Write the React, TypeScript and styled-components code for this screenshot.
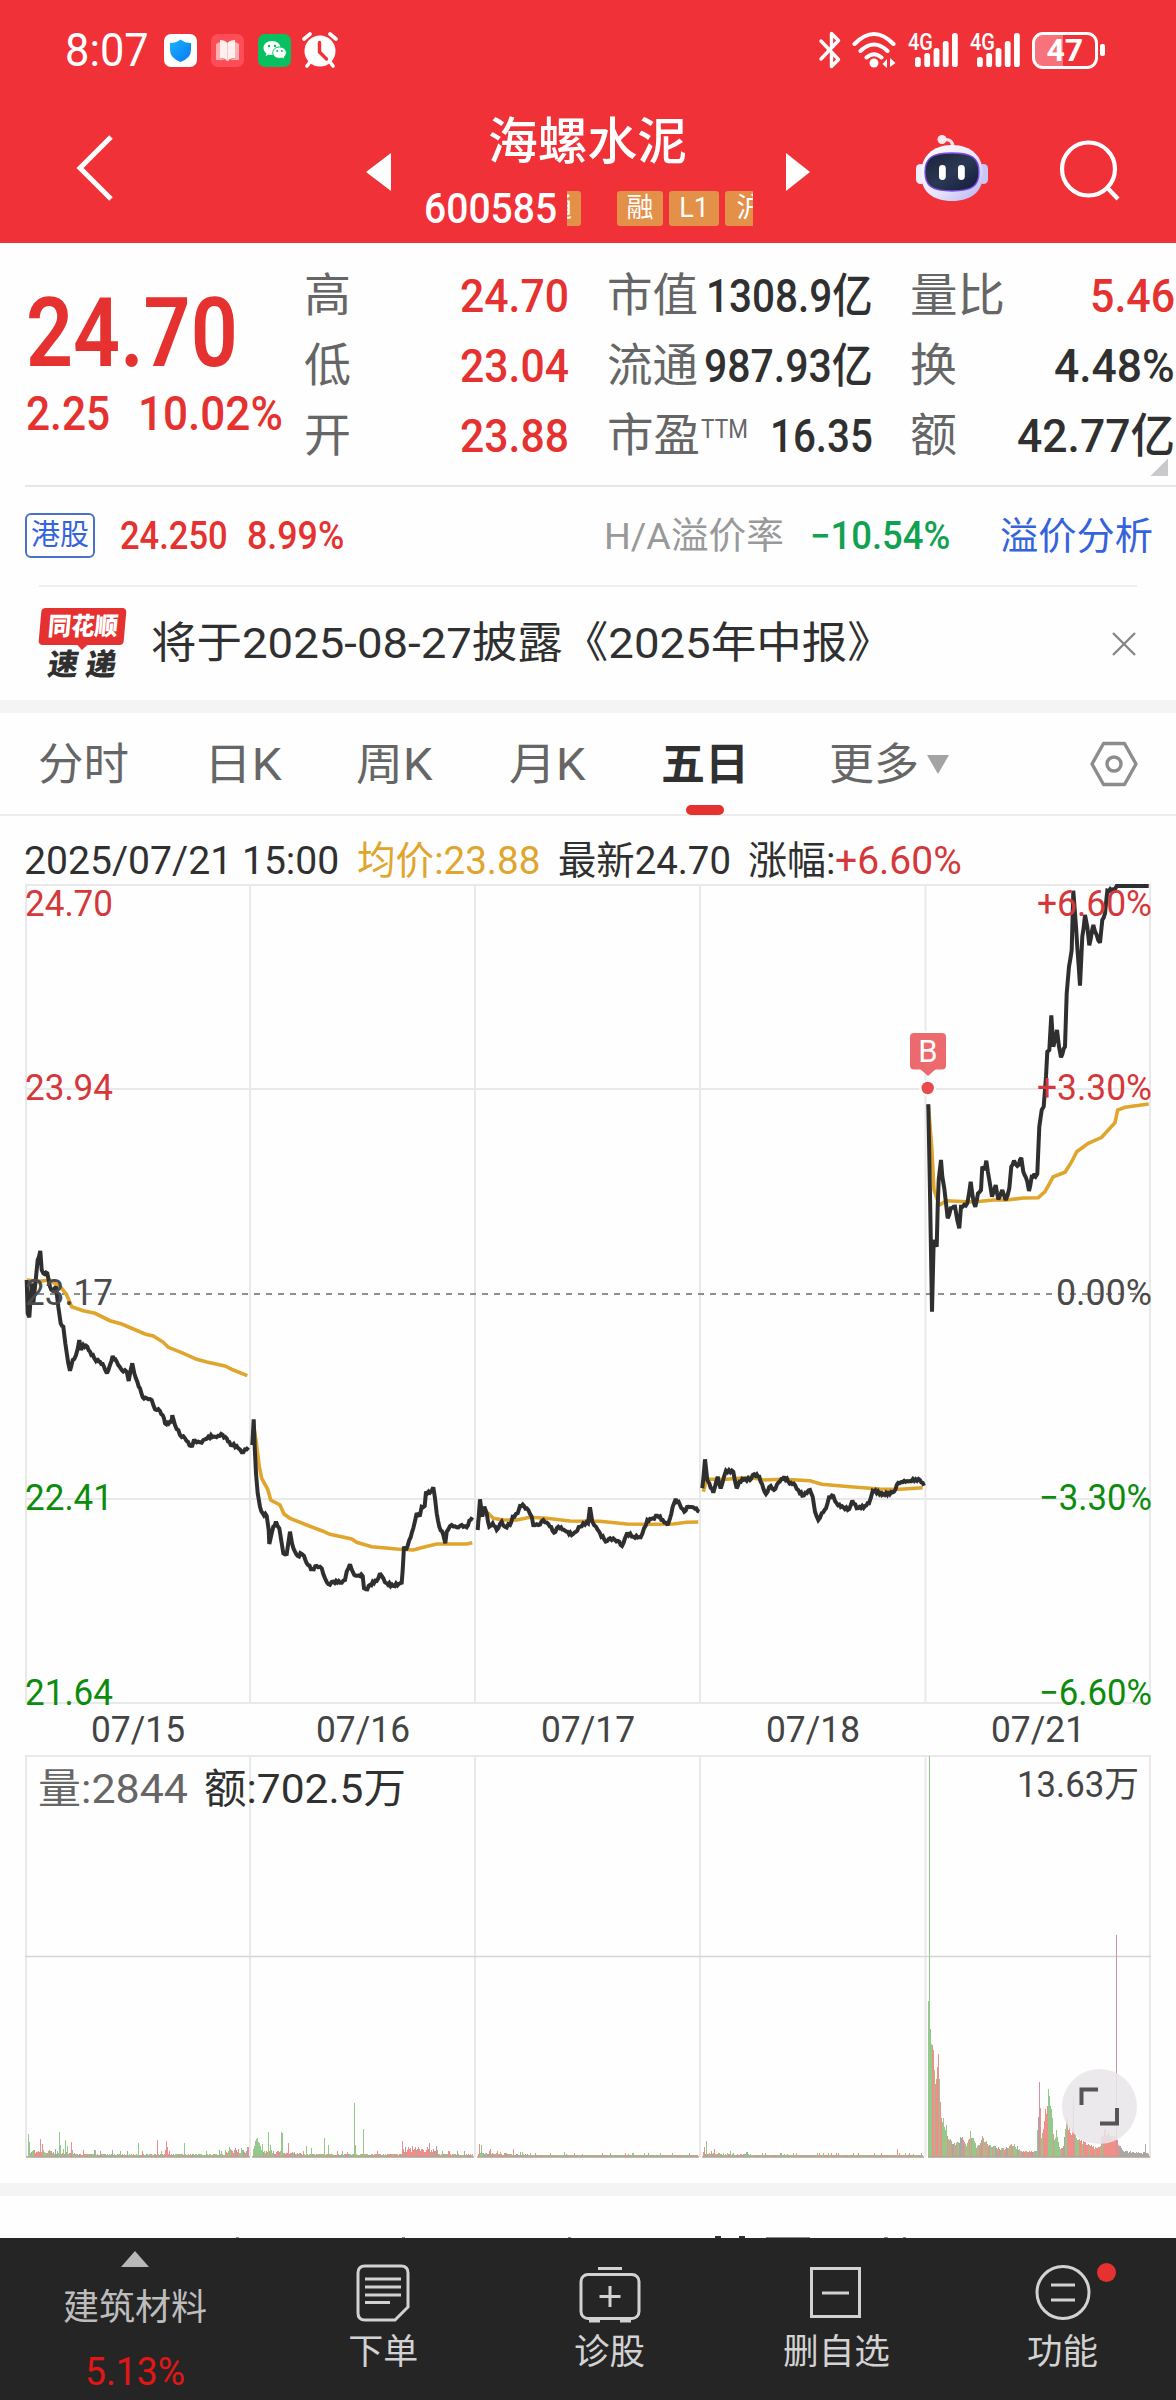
import React, { useLayoutEffect, useRef, useState } from "react";
import styled, { createGlobalStyle, css } from "styled-components";

const SANS = `Roboto, "Noto Sans CJK SC", sans-serif`;
const C = {
  brand: "#f03138",
  red: "#e5312f",
  softRed: "#d5383a",
  green: "#12a150",
  axisGreen: "#0c8c0c",
  ink: "#303030",
  label: "#666666",
  faint: "#999999",
  blue: "#3563dc",
  gold: "#e0a52c",
  grid: "#e9e9e9",
};

const Global = createGlobalStyle`
  * { box-sizing: border-box; }
  html, body { margin: 0; padding: 0; background: #fefefe; }
  body { font-family: ${SANS}; color: ${C.ink}; }
`;

/* ---------- text fitted to a known column width ---------- */

type TextProps = { $size: number; $color?: string; $weight?: number; $ml?: number };

const FitBox = styled.span<TextProps & { $w: number }>`
  display: block;
  flex: none;
  width: ${(p) => p.$w}px;
  height: ${(p) => p.$size}px;
  margin-left: ${(p) => p.$ml ?? 0}px;
  line-height: 1;
  font-size: ${(p) => p.$size}px;
  font-weight: ${(p) => p.$weight ?? 400};
  color: ${(p) => p.$color ?? C.ink};
  white-space: pre;
`;
const FitInner = styled.span`
  display: inline-block;
  transform-origin: 0 50%;
  line-height: 1;
`;

function Fit({
  w, size, color, weight, ml, children,
}: { w: number; size: number; color?: string; weight?: number; ml?: number; children: React.ReactNode }) {
  const ref = useRef<HTMLSpanElement>(null);
  const [scale, setScale] = useState(1);
  useLayoutEffect(() => {
    if (ref.current) setScale(w / ref.current.offsetWidth);
  }, [w, children]);
  return (
    <FitBox $w={w} $size={size} $color={color} $weight={weight} $ml={ml}>
      <FitInner ref={ref} style={{ transform: `scaleX(${scale})` }}>{children}</FitInner>
    </FitBox>
  );
}

const Icon = styled.svg<{ $ml?: number; $up?: number }>`
  display: block;
  flex: none;
  margin-left: ${(p) => p.$ml ?? 0}px;
  margin-bottom: ${(p) => p.$up ?? 0}px;
`;

/* ---------- page ---------- */

const Page = styled.main`
  width: 1176px;
  height: 2400px;
  display: flex;
  flex-direction: column;
  overflow: hidden;
  background: #fefefe;
`;
const Header = styled.header`
  flex: none;
  height: 243px;
  background: ${C.brand};
`;
const StatusBar = styled.div`
  display: flex;
  align-items: center;
  height: 100px;
  padding: 0 71px 0 65px;
`;
const StatusRight = styled.div`
  display: flex;
  align-items: center;
  margin-left: auto;
`;
const Battery = styled.div`
  display: flex;
  align-items: center;
  margin-left: 11px;
`;
const Cell = styled.div`
  display: flex;
  align-items: center;
  justify-content: center;
  width: 66px;
  height: 37px;
  border: 3px solid #fff;
  border-radius: 11px;
  background: linear-gradient(90deg, #f7727a 0 47%, ${C.brand} 47%);
`;
const Nub = styled.div`
  width: 5px;
  height: 12px;
  margin-left: 2px;
  border-radius: 2px;
  background: #fff;
`;
const Nav = styled.div`
  display: flex;
  align-items: center;
  height: 143px;
  padding-left: 75px;
`;
const TitleBlock = styled.div`
  display: flex;
  flex-direction: column;
  align-items: center;
  gap: 24px;
  width: 331px;
  margin-left: 31px;
`;
const CodeRow = styled.div`
  display: flex;
  align-items: center;
  width: 331px;
  height: 36px;
`;
const Tags = styled.div`
  display: flex;
  flex: 1;
  gap: 6px;
  margin-left: 10px;
  overflow: hidden;
`;
const Tag = styled.div<{ $w: number; $cut?: boolean }>`
  display: flex;
  flex: none;
  align-items: center;
  justify-content: ${(p) => (p.$cut ? "flex-end" : "center")};
  width: ${(p) => p.$w}px;
  height: 35px;
  overflow: hidden;
  border-radius: 3px;
  background: #e39049;
  color: #fff;
  font-size: 27px;
  line-height: 1;
  ${(p) => p.$cut && css`margin-right: 30px; padding-right: 9px; border-radius: 0 3px 3px 0;`}
`;

/* ---------- quote ---------- */

const Quote = styled.section`
  position: relative;
  display: flex;
  flex: none;
  height: 244px;
  margin-left: 25px;
  border-bottom: 2px solid #e6e6e6;
`;
const LastPrice = styled.div`
  display: flex;
  flex-direction: column;
  gap: 9px;
  width: 279px;
  padding-top: 42px;
`;
const Inline = styled.div`
  display: flex;
  align-items: center;
`;
const StatCol = styled.div<{ $w: number; $ml?: number }>`
  display: flex;
  flex-direction: column;
  width: ${(p) => p.$w}px;
  margin-left: ${(p) => p.$ml ?? 0}px;
  padding-top: 17px;
`;
const StatRow = styled.div`
  display: flex;
  align-items: center;
  justify-content: space-between;
  height: 70px;
`;
const Sup = styled.span`
  display: block;
  height: 37px;
`;
const Corner = styled.div`
  position: absolute;
  right: 8px;
  bottom: 9px;
  width: 18px;
  height: 18px;
  background: linear-gradient(135deg, transparent 50%, #c9c8ca 50%);
`;
const HkRow = styled.section`
  display: flex;
  flex: none;
  align-items: center;
  height: 98px;
  padding-left: 25px;
`;
const HkBadge = styled.div`
  display: flex;
  align-items: center;
  justify-content: center;
  width: 70px;
  height: 45px;
  margin: -2px 25px 0 0;
  border: 2px solid #4a72c8;
  border-radius: 6px;
`;
const News = styled.section`
  display: flex;
  flex: none;
  align-items: center;
  height: 115px;
  margin: 0 39px;
  border-top: 2px solid #efefef;
`;
const NewsLogo = styled.div`
  display: flex;
  flex-direction: column;
  align-items: center;
  width: 88px;
`;
const LogoBadge = styled.div`
  position: relative;
  display: flex;
  align-items: center;
  justify-content: center;
  width: 85px;
  height: 37px;
  border-radius: 4px;
  background: ${C.red};
  transform: skewX(-5deg);
  &::after {
    content: "";
    position: absolute;
    left: 38px;
    top: 36px;
    border: 6px solid transparent;
    border-top-color: ${C.red};
    border-bottom: 0;
  }
`;
const LogoWord = styled.div`
  margin-top: 5px;
  transform: skewX(-9deg);
`;
const Band = styled.div`
  flex: none;
  height: 13px;
  background: #f4f4f4;
`;
const Tabs = styled.nav`
  display: flex;
  flex: none;
  align-items: center;
  height: 103px;
  padding-left: 38px;
  border-bottom: 2px solid #ececec;
`;
const Tab = styled.div<{ $active?: boolean; $ml?: number }>`
  position: relative;
  display: flex;
  align-items: center;
  height: 101px;
  padding-top: 2px;
  margin-left: ${(p) => p.$ml ?? 0}px;
  ${(p) => p.$active && css`
    &::after {
      content: "";
      position: absolute;
      left: 50%;
      bottom: -1px;
      width: 38px;
      height: 10px;
      margin-left: -19px;
      border-radius: 5px;
      background: ${C.red};
    }
  `}
`;
const InfoRow = styled.div`
  display: flex;
  flex: none;
  align-items: center;
  height: 68px;
  padding: 23px 0 0 24px;
`;
const Chart = styled.svg`
  display: block;
  flex: none;
`;
const ChartArea = styled.section`
  position: relative;
  flex: none;
  height: 1299px;
`;
const Expand = styled.button`
  position: absolute;
  left: 1062px;
  top: 1185px;
  width: 75px;
  height: 75px;
  padding: 0;
  border: 0;
  border-radius: 50%;
  background: rgba(232, 230, 232, 0.88);
`;
const Peek = styled.div`
  flex: none;
  height: 42px;
`;
const BottomBar = styled.footer`
  display: flex;
  flex: none;
  height: 162px;
  background: #252525;
`;
const Sector = styled.div`
  display: flex;
  flex-direction: column;
  align-items: center;
  width: 270px;
  padding-top: 13px;
`;
const SectorName = styled.div`
  margin: 23px 0 27px;
`;
const Action = styled.div`
  position: relative;
  display: flex;
  flex: 1;
  flex-direction: column;
  align-items: center;
  gap: 11px;
  padding-top: 24px;
`;
const Dot = styled.span`
  position: absolute;
  left: 147px;
  top: 25px;
  width: 19px;
  height: 19px;
  border-radius: 50%;
  background: ${C.red};
`;

/* ---------- status icons ---------- */

const Signal = ({ ml }: { ml: number }) => (
  <Icon $ml={ml} width="51" height="36" viewBox="0 0 51 36" fill="#fff">
    <text x="0" y="17.500" fontSize="23" fontWeight="500" textLength="25" lengthAdjust="spacingAndGlyphs">4G</text>
    {[[7, 25], [16.3, 21], [25.6, 16], [34.8, 9], [44, 1]].map(([x, y]) => (
      <rect key={x} x={x} y={y} width="5.8" height={35 - y} rx="2.6" />
    ))}
  </Icon>
);

const StatusIcons = () => (
  <>
    <Icon $ml={15} width="33" height="33" viewBox="0 0 33 33">
      <defs>
        <linearGradient id="shield" x1="0" y1="0" x2="1" y2="1">
          <stop offset="0" stopColor="#19b4fb" /><stop offset="1" stopColor="#0a78f5" />
        </linearGradient>
      </defs>
      <rect width="33" height="33" rx="7" fill="#fff" />
      <path d="M16.5 5.5 Q21 9 27 9 V16 Q27 24 16.5 28 Q6 24 6 16 V9 Q12 9 16.5 5.5Z" fill="url(#shield)" />
    </Icon>
    <Icon $ml={14} width="33" height="33" viewBox="0 0 33 33">
      <rect width="33" height="33" rx="7" fill="#fd4d57" />
      <path d="M5 10 L9 8 V24 L16.500 27 L24 24 V8 L28 10 V26 H17 L16.500 27 L16 26 H5Z" fill="#ffaeb3" />
      <path d="M9 6 Q14 6 16.500 9 Q19 6 24 6 V24 Q19 24 16.500 27 Q14 24 9 24Z" fill="#fff0ee" />
      <path d="M16.500 9 V27" stroke="#ffc7c7" strokeWidth="1" />
    </Icon>
    <Icon $ml={14} width="33" height="33" viewBox="0 0 33 33">
      <rect width="33" height="33" rx="7" fill="#07c160" />
      <path d="M14 7 C9 7 5.500 10 5.500 14 C5.500 16.300 6.600 18 8.300 19.300 L7.700 22 L10.700 20.400 Q12 21 14 21 C19 21 22.500 18 22.500 14 S19 7 14 7Z" fill="#fff" />
      <path d="M21.500 13 C17.500 13 14.800 15.500 14.800 18.700 S17.500 24.400 21.500 24.400 Q23 24.400 24.200 24 L26.600 25.500 L26.200 23 C27.600 22 28.300 20.500 28.300 18.700 C28.300 15.500 25.500 13 21.500 13Z" fill="#fff" stroke="#07c160" strokeWidth="1" />
      <g fill="#07c160"><circle cx="11" cy="12" r="1.200" /><circle cx="17" cy="12" r="1.200" /><circle cx="19.300" cy="17" r="1" /><circle cx="23.800" cy="17" r="1" /></g>
    </Icon>
    <Icon $ml={11} width="36" height="36" viewBox="0 0 36 36" fill="none">
      <circle cx="18" cy="19" r="15.500" fill="#fff" />
      <path d="M2 7 L8 2 M34 7 L28 2 M8 30 L5 34 M28 30 L31 34" stroke="#fff" strokeWidth="3.600" strokeLinecap="round" />
      <path d="M17.500 10.500 V20 L24.500 27" stroke={C.brand} strokeWidth="3.400" strokeLinecap="round" />
    </Icon>
  </>
);

const RadioIcons = () => (
  <>
    <Icon width="24" height="38" viewBox="0 0 24 38" fill="none" stroke="#fff" strokeWidth="3.400" strokeLinecap="round" strokeLinejoin="round">
      <path d="M3 10 L20.500 28.500 L13.500 35.500 V21 M3 28 L20.500 9.500 L13.500 2.500 V16" />
    </Icon>
    <Icon $ml={10} width="46" height="36" viewBox="0 0 46 36" fill="none" stroke="#fff" strokeWidth="4" strokeLinecap="round">
      <path d="M2.500 12 Q22 -8 41.500 12 M8.500 19 Q22 6 35.500 19 M14.500 25.500 Q22 19 29.500 25.500" />
      <circle cx="22" cy="31" r="4.500" fill="#fff" stroke="none" />
      <path d="M35 27 V36 L30.500 32Z M38 26 V35 L43.500 31Z" fill="#fff" stroke="none" />
    </Icon>
  </>
);

const Robot = () => (
  <Icon $ml={106} $up={7} width="72" height="68" viewBox="0 0 72 68" fill="none">
    <defs>
      <linearGradient id="head" x1="0" y1="0" x2="1" y2="1">
        <stop offset="0" stopColor="#ffffff" /><stop offset=".55" stopColor="#ebe6fb" /><stop offset="1" stopColor="#b3b1ee" />
      </linearGradient>
      <linearGradient id="visor" x1="0" y1="0" x2="1" y2="1">
        <stop offset="0" stopColor="#1b2238" /><stop offset=".5" stopColor="#2b3853" /><stop offset="1" stopColor="#111a3a" />
      </linearGradient>
    </defs>
    <path d="M27 6 Q37 4 37 14" stroke="#f4dfe8" strokeWidth="3.200" />
    <circle cx="26" cy="5.500" r="4.500" fill="#fbe9ee" />
    <rect x="0" y="30" width="9" height="20" rx="4.500" fill="#efecfb" />
    <rect x="63" y="30" width="9" height="20" rx="4.500" fill="#c9c6f5" />
    <path d="M36 11 C56 11 67 23 67 40 C67 58 55 67 36 67 S5 58 5 40 C5 23 16 11 36 11Z" fill="url(#head)" />
    <path d="M36 19 C56 19 63 24 63 38 C63 52 56 57 36 57 S9 52 9 38 C9 24 16 19 36 19Z" fill="url(#visor)" stroke="#7a4ee8" strokeWidth="1.400" />
    <rect x="23" y="31" width="6.800" height="15" rx="3.400" fill="#fff" />
    <rect x="42" y="31" width="6.800" height="15" rx="3.400" fill="#fff" />
  </Icon>
);

/* ---------- chart data ---------- */

type Pt = [number, number];
type Day = { ox: number; oy: number; price: string; avg: string };

const DAYS: Day[] = [
  {
    ox: 0, oy: 1180,
    price: "80,300 83,400 88,412 95,310 100,370 107,300 113,240 121,213 125,270 130,280 142,280 150,320 158,330 168,320 175,380 182,430 190,440 196,490 205,550 210,572 218,540 228,525 238,480 243,510 250,495 262,500 270,515 283,535 300,545 312,560 321,580 330,555 338,528 350,545 365,570 380,575 386,603 392,570 397,550 403,580 412,605 420,625 428,652 440,655 455,660 465,688 480,693 492,715 495,730 515,725 517,706 525,735 540,765 555,775 573,798 585,782 600,787 615,778 625,770 645,770 668,765 680,775 692,795 710,798 725,817 735,808 745,802",
    avg: "80,300 100,302 125,303 150,300 185,325 200,345 215,380 250,392 285,400 330,422 365,432 400,447 435,462 460,468 490,487 505,502 545,518 590,538 620,546 675,558 700,570 742,587",
  },
  {
    ox: 0, oy: 1180,
    price: "757,795 761,718 764,800 768,880 773,940 780,980 788,1000 800,1008 806,1050 808,1092 815,1060 820,1040 828,1025 838,1045 845,1090 850,1120 860,1122 865,1090 870,1055 876,1090 885,1115 893,1128 905,1122 912,1128 920,1150 937,1168 950,1158 965,1165 975,1195 985,1212 1000,1205 1020,1208 1035,1200 1040,1175 1050,1153 1058,1175 1068,1187 1088,1188 1092,1225 1098,1228 1110,1215 1130,1203 1140,1180 1150,1195 1160,1210 1180,1218 1205,1208 1208,1170 1212,1100 1218,1110 1228,1080 1240,1045 1250,1000 1260,1005 1265,980 1274,978 1278,935 1290,938 1300,922 1305,955 1310,1000 1318,1040 1330,1065 1336,1090 1340,1055 1355,1035 1370,1042 1385,1035 1400,1042 1408,1022 1417,1012",
    avg: "761,740 768,780 778,860 785,895 803,928 812,960 840,975 852,1002 870,1015 920,1035 965,1052 990,1063 1055,1077 1070,1087 1115,1100 1190,1107 1240,1110 1270,1102 1310,1092 1400,1092 1417,1088",
  },
  {
    ox: 450, oy: 1380,
    price: "83,450 90,358 97,410 103,380 110,400 118,440 128,430 140,450 155,425 165,440 180,435 188,410 203,400 210,378 222,378 235,390 245,410 250,435 265,435 280,420 295,432 312,458 325,440 345,452 365,465 378,455 390,440 400,430 414,430 420,382 427,425 438,440 450,460 467,485 480,475 495,480 508,485 516,498 525,475 532,458 550,470 572,472 582,445 592,420 608,415 622,407 638,420 653,435 660,415 668,380 677,357 690,375 703,395 715,380 730,382 748,395",
    avg: "83,430 92,395 115,400 130,415 160,420 200,420 240,412 290,415 360,423 450,424 530,432 600,433 670,432 710,427 745,426",
  },
  {
    ox: 450, oy: 1380,
    price: "757,325 765,238 772,300 778,310 790,338 803,290 812,325 822,290 828,272 850,275 860,325 868,305 885,297 900,300 912,283 928,290 940,325 948,342 962,318 972,330 985,308 1003,290 1015,305 1035,315 1045,330 1057,347 1080,330 1088,350 1095,395 1105,420 1115,400 1128,385 1137,352 1150,348 1160,370 1180,382 1198,387 1207,362 1220,385 1245,378 1257,370 1268,332 1300,342 1332,335 1345,308 1380,303 1410,300 1422,317",
    avg: "760,335 770,298 830,298 900,292 940,300 1000,298 1080,302 1115,313 1200,320 1290,327 1350,328 1418,323",
  },
  {
    ox: 880, oy: 860,
    price: "145,733 150,1000 156,1355 161,1140 170,1160 173,1040 176,960 183,900 187,950 193,985 198,1030 203,1075 212,1045 225,1040 232,1080 238,1105 243,1040 262,1030 272,965 278,1010 286,1040 294,1000 303,990 307,920 314,930 319,902 328,960 336,1010 347,975 355,1018 367,990 377,1020 388,985 394,920 402,902 412,918 424,893 430,935 442,965 447,993 455,950 472,942 478,800 485,750 491,740 498,650 502,575 508,570 514,466 520,560 531,510 537,560 543,592 555,560 560,400 567,320 575,270 580,92 588,200 600,377 607,230 615,165 622,200 628,256 640,195 650,225 660,248 667,180 675,160 682,92 700,88 710,78 806,78",
    avg: "145,733 155,860 162,990 178,1035 200,1022 280,1026 340,1020 380,1020 430,1014 475,1013 495,995 520,950 555,937 575,905 590,875 625,850 665,832 705,788 713,750 735,742 806,732",
  },
];

const points = (d: Day, s: string): Pt[] =>
  s.split(" ").map((p) => {
    const [x, y] = p.split(",").map(Number);
    return [d.ox + x / 3, d.oy + y / 3];
  });

const rand = (n: number) => {
  const v = Math.sin(n * 127.1 + 11.7) * 43758.5453;
  return v - Math.floor(v);
};

/* minute ticks between the known turning points */
const withTicks = (pts: Pt[]): Pt[] => {
  const out: Pt[] = [];
  pts.forEach((p, i) => {
    out.push(p);
    const q = pts[i + 1];
    if (!q || p[1] < 888) return;
    const n = Math.floor((q[0] - p[0]) / 1.3);
    for (let k = 1; k < n; k++) {
      const t = k / n;
      out.push([p[0] + (q[0] - p[0]) * t, p[1] + (q[1] - p[1]) * t + (k % 2 ? 1.6 : -1.6) * rand(p[0] + k)]);
    }
  });
  return out;
};
const line = (pts: Pt[]) => pts.map(([x, y]) => `${x.toFixed(1)},${y.toFixed(1)}`).join(" ");

const BASE = 2157;
const GREEN = "#93c98a";
const RED = "#ef8f8a";
const GREY = "#a9a6a8";

const PEAKS: [number, number, string][] = [
  [28.5, 23, GREEN], [29.5, 15, GREEN], [40.5, 18, RED], [42.5, 13, RED], [59.3, 25, GREEN], [60.3, 12, GREEN], [65.5, 17, GREEN], [67, 11, GREEN],
  [71, 15, RED], [138.6, 14, GREEN], [157, 17, RED], [166, 16, RED], [167, 10, RED], [184, 14, GREEN], [229.5, 10, GREEN], [248, 10, RED],
  [255, 16, GREEN], [256, 18, GREEN], [257, 19, GREEN], [258, 15, GREEN], [259, 14, GREEN], [260, 11, GREEN], [262, 13, GREEN], [268, 25, GREEN], [270, 12, GREEN], [281.5, 25, GREEN], [282.5, 24, GREEN], [288.5, 14, RED],
  [306, 11, GREEN], [311, 9, GREEN], [324.5, 19, GREEN], [328, 12, GREEN], [354.5, 54, GREEN], [355.5, 12, GREEN], [363.7, 28, GREEN], [402.5, 16, RED],
  [479, 13, RED], [481, 12, GREEN], [490, 8, RED], [513, 8, RED], [564, 5, GREEN],
  [704, 10, RED], [706, 16, GREEN], [714, 8, RED], [730, 6, GREEN], [897, 8, RED],
  [929.4, 401, GREEN], [1039.5, 75, "#dd8f9c"], [1048.5, 68, GREEN], [1073.3, 62, "#dd8f9c"], [1116.5, 222, "#c8949f"], [1145.7, 13, GREY],
];

const OPENING: Pt[] = [
  [146, 148], [150, 130], [155, 152], [160, 133], [165, 100], [170, 80], [176, 112], [181, 60], [185, 50], [190, 37], [197, 35], [204, 20],
  [215, 16], [230, 13], [245, 21], [260, 12], [272, 27], [290, 10], [307, 20], [330, 12], [350, 10], [375, 9], [400, 13], [430, 6], [470, 6],
  [478, 70], [485, 22], [494, 44], [505, 68], [515, 50], [522, 20], [530, 27], [540, 10], [550, 9], [560, 42], [570, 28], [580, 30], [590, 20],
  [610, 17], [640, 11], [660, 11], [668, 27], [690, 25], [705, 20], [715, 15], [730, 6], [760, 5], [806, 4],
];

const volumeBars = () => {
  const bars: [number, number, string][] = [];
  for (let x = 27; x < 924; x++) {
    const day = Math.floor((x - 26) / 225);
    const local = (x - 26 - day * 225) / 225;
    if (local > 0.985 || local < 0.006) continue;
    const open = local < 0.22 ? 5 - local * 12 : 1.5;
    const burst = day === 1 && local > 0.67 && local < 0.83 ? 5 : 0;
    const close = day === 0 && local > 0.88 ? 3 : 0;
    const level = day < 2 ? 1 : 0.5;
    const h = 1.2 + (open + burst + close) * level * (0.5 + rand(x)) + (rand(x * 3.1) > 0.9 ? 3.5 * level : 0);
    const r = rand(x * 7.7);
    const col = burst ? (r > 0.2 ? RED : GREY) : r > 0.55 ? GREEN : r > 0.22 ? RED : GREY;
    bars.push([x + 0.5, h, col]);
  }
  for (let x = 928.5; x < 1149; x++) {
    const z = (x - 880) * 3;
    let i = OPENING.findIndex((p) => p[0] > z);
    if (i < 1) i = 1;
    const [a, b] = [OPENING[i - 1], OPENING[i]];
    const env = a[1] + ((b[1] - a[1]) * (z - a[0])) / (b[0] - a[0]);
    const h = Math.max(1, env * (0.75 + 0.33 * rand(x)));
    const r = rand(x * 5.3);
    const greenish = z < 156 || (z > 185 && z < 205) || (z > 268 && z < 285) || (z > 503 && z < 512) || (z > 518 && z < 545) || (z > 584 && z < 600);
    const reddish = (z >= 156 && z <= 185) || (z > 476 && z < 503) || (z > 555 && z < 584) || (z > 600 && z < 712);
    const col = z > 716 ? GREY : greenish ? (r > 0.15 ? GREEN : RED) : reddish ? (r > 0.2 ? RED : GREEN) : r > 0.6 ? RED : r > 0.25 ? GREEN : GREY;
    bars.push([x, h, col]);
  }
  return bars.concat(PEAKS);
};

const COLS = [26, 250, 475, 700, 925.5, 1150];
const DATES = ["07/15", "07/16", "07/17", "07/18", "07/21"];
const AXIS: [string, string, number, number, string][] = [
  ["24.70", "+6.60%", 916, 115, C.softRed],
  ["23.94", "+3.30%", 1100, 115, C.softRed],
  ["23.17", "0.00%", 1305, 96, "#4a4a4a"],
  ["22.41", "−3.30%", 1510, 113, C.axisGreen],
  ["21.64", "−6.60%", 1705, 113, C.axisGreen],
];

const FiveDayChart = () => (
  <Chart width="1176" height="1299" viewBox="0 884 1176 1299" fill="none">
    <g stroke={C.grid} strokeWidth="2">
      {COLS.map((x) => <path key={x} d={`M${x} 885V1703M${x} 1756V${BASE}`} />)}
      {[885, 1089, 1499, 1703, 1756].map((y) => <path key={y} d={`M25 ${y}H1151`} />)}
    </g>
    <path d="M25 1956.500H1151" stroke="#d3d6d3" strokeWidth="1.300" />
    <path d="M26 1294H1150" stroke="#8e8e8e" strokeWidth="1.800" strokeDasharray="6 6" />
    {DAYS.map((d, i) => (
      <g key={i} strokeLinejoin="miter" strokeMiterlimit="2">
        <polyline points={line(points(d, d.avg))} stroke={C.gold} strokeWidth="3.600" />
        <polyline points={line(withTicks(points(d, d.price)))} stroke="#2f2f2f" strokeWidth="4" />
      </g>
    ))}
    <rect x="908" y="1031" width="40" height="42" rx="5" fill="#fefefe" />
    <path d="M919 1068 L928 1076 L937 1068Z" fill="#ec6a6e" />
    <rect x="910" y="1033" width="36" height="36.500" rx="4" fill="#ec6a6e" />
    <text x="928" y="1062" fontSize="31" fill="#fff" textAnchor="middle">B</text>
    <circle cx="927.700" cy="1088" r="8.500" fill="#fefefe" />
    <circle cx="927.700" cy="1088" r="6.200" fill="#ea4a4e" />
    {AXIS.map(([l, r, y, w, col]) => (
      <g key={l} fill={col} fontSize="36">
        <text x="25" y={y} textLength="88" lengthAdjust="spacingAndGlyphs">{l}</text>
        <text x={1152 - w} y={y} textLength={w} lengthAdjust="spacingAndGlyphs">{r}</text>
      </g>
    ))}
    {DATES.map((t, i) => (
      <text key={t} x={91 + i * 225} y="1742" fontSize="36" fill="#444" textLength="94" lengthAdjust="spacingAndGlyphs">{t}</text>
    ))}
    <g shapeRendering="crispEdges">
      {volumeBars().map(([x, h, col], i) => (
        <rect key={i} x={Math.round(x - 0.5)} y={BASE - h} width="1" height={h} fill={col} />
      ))}
    </g>
    <path d={`M26 ${BASE}H250M252 ${BASE}H474M477 ${BASE}H699M702 ${BASE}H924M928 ${BASE}H1150`} stroke="#b0a596" strokeWidth="1.500" />
    <text x="38" y="1802.500" fontSize="41" fill={C.label} textLength="150" lengthAdjust="spacingAndGlyphs">量:2844</text>
    <text x="204" y="1802.500" fontSize="41" fill={C.ink} textLength="202" lengthAdjust="spacingAndGlyphs">额:702.5万</text>
    <text x="1017" y="1797" fontSize="36" fill="#444" textLength="122" lengthAdjust="spacingAndGlyphs">13.63万</text>
  </Chart>
);

/* ---------- quote data ---------- */

type Stat = { label: string; lw: number; value: string; vw: number; red?: boolean; sup?: string };
const STATS: { w: number; ml: number; rows: Stat[] }[] = [
  {
    w: 265, ml: 0, rows: [
      { label: "高", lw: 47, value: "24.70", vw: 109, red: true },
      { label: "低", lw: 47, value: "23.04", vw: 109, red: true },
      { label: "开", lw: 47, value: "23.88", vw: 109, red: true },
    ],
  },
  {
    w: 266, ml: 38, rows: [
      { label: "市值", lw: 91, value: "1308.9亿", vw: 167 },
      { label: "流通", lw: 91, value: "987.93亿", vw: 169 },
      { label: "市盈", lw: 93, value: "16.35", vw: 103, sup: "TTM" },
    ],
  },
  {
    w: 265, ml: 37, rows: [
      { label: "量比", lw: 95, value: "5.46", vw: 85, red: true },
      { label: "换", lw: 47, value: "4.48%", vw: 121 },
      { label: "额", lw: 47, value: "42.77亿", vw: 158 },
    ],
  },
];

const NAV_GREY = "#d2d2d2";

export default function App() {
  return (
    <Page>
      <Global />
      <Header>
        <StatusBar>
          <Fit w={84} size={46} color="#fff">8:07</Fit>
          <StatusIcons />
          <StatusRight>
            <RadioIcons />
            <Signal ml={10} />
            <Signal ml={11} />
            <Battery>
              <Cell><Fit w={37} size={32} weight={700} color="#fff">47</Fit></Cell>
              <Nub />
            </Battery>
          </StatusRight>
        </StatusBar>
        <Nav>
          <Icon $up={7} width="39" height="66" viewBox="0 0 39 66" fill="none" stroke="#fff" strokeWidth="5">
            <path d="M36 2 L5 33 L36 64" />
          </Icon>
          <Icon $ml={252} width="25" height="38" viewBox="0 0 25 38" fill="#fff"><path d="M25 0V38L0 19Z" /></Icon>
          <TitleBlock>
            <Fit w={199} size={50} weight={500} color="#fff">海螺水泥</Fit>
            <CodeRow>
              <Fit w={133} size={42} weight={500} color="#fff" ml={2}>600585</Fit>
              <Tags>
                <Tag $w={14} $cut>通</Tag>
                <Tag $w={46}>融</Tag>
                <Tag $w={50}>L1</Tag>
                <Tag $w={50}>沪</Tag>
              </Tags>
            </CodeRow>
          </TitleBlock>
          <Icon $ml={33} width="24" height="38" viewBox="0 0 24 38" fill="#fff"><path d="M0 0V38L24 19Z" /></Icon>
          <Robot />
          <Icon $ml={71} $up={3} width="62" height="62" viewBox="0 0 62 62" fill="none" stroke="#fff" strokeWidth="4.200">
            <circle cx="29.500" cy="30" r="26.500" />
            <path d="M48 48.500 L59 60" />
          </Icon>
        </Nav>
      </Header>

      <Quote>
        <LastPrice>
          <Fit w={212} size={96} weight={600} color={C.red} ml={1}>24.70</Fit>
          <Inline>
            <Fit w={84} size={48} weight={500} color={C.red} ml={1}>2.25</Fit>
            <Fit w={145} size={48} weight={500} color={C.red} ml={28}>10.02%</Fit>
          </Inline>
        </LastPrice>
        {STATS.map((col, i) => (
          <StatCol key={i} $w={col.w} $ml={col.ml}>
            {col.rows.map((r) => (
              <StatRow key={r.label}>
                <Inline>
                  <Fit w={r.lw} size={46} color={C.label}>{r.label}</Fit>
                  {r.sup && <Sup><Fit w={47} size={25} color={C.label} ml={1}>{r.sup}</Fit></Sup>}
                </Inline>
                <Fit w={r.vw} size={47} weight={500} color={r.red ? C.red : C.ink}>{r.value}</Fit>
              </StatRow>
            ))}
          </StatCol>
        ))}
        <Corner />
      </Quote>

      <HkRow>
        <HkBadge><Fit w={58} size={29} color={C.blue}>港股</Fit></HkBadge>
        <Fit w={108} size={38} weight={500} color={C.red}>24.250</Fit>
        <Fit w={97} size={38} weight={500} color={C.red} ml={19}>8.99%</Fit>
        <Fit w={180} size={37} color={C.faint} ml={260}>H/A溢价率</Fit>
        <Fit w={140} size={38} weight={500} color={C.green} ml={26}>−10.54%</Fit>
        <Fit w={153} size={38} color={C.blue} ml={50}>溢价分析</Fit>
      </HkRow>

      <News>
        <NewsLogo>
          <LogoBadge><Fit w={70} size={25} weight={900} color="#fff">同花顺</Fit></LogoBadge>
          <LogoWord><Fit w={68} size={30} weight={900}>速 递</Fit></LogoWord>
        </NewsLogo>
        <Fit w={742} size={43} ml={26}>将于2025-08-27披露《2025年中报》</Fit>
        <Icon $ml={218} width="26" height="26" viewBox="0 0 26 26" stroke="#858585" strokeWidth="2.300">
          <path d="M2 2 L24 24 M24 2 L2 24" />
        </Icon>
      </News>
      <Band />

      <Tabs>
        <Tab><Fit w={91} size={44} color={C.label}>分时</Fit></Tab>
        <Tab $ml={75}><Fit w={78} size={44} color={C.label}>日K</Fit></Tab>
        <Tab $ml={74}><Fit w={77} size={44} color={C.label}>周K</Fit></Tab>
        <Tab $ml={76}><Fit w={77} size={44} color={C.label}>月K</Fit></Tab>
        <Tab $active $ml={75}><Fit w={88} size={44} weight={700}>五日</Fit></Tab>
        <Tab $ml={80}>
          <Fit w={90} size={44} color={C.label}>更多</Fit>
          <Icon $ml={8} width="22" height="19" viewBox="0 0 22 19" fill="#a3a3a3"><path d="M0 0H22L11 19Z" /></Icon>
        </Tab>
        <Icon $ml={141} width="48" height="46" viewBox="0 0 48 46" fill="none" stroke="#8c8c8c" strokeWidth="3.400" strokeLinejoin="round">
          <path d="M13.500 2.500H34.500L46 23L34.500 43.500H13.500L2 23Z" />
          <circle cx="24" cy="23" r="7" />
        </Icon>
      </Tabs>

      <InfoRow>
        <Fit w={315} size={39}>2025/07/21 15:00</Fit>
        <Fit w={183} size={39} color={C.gold} ml={18}>均价:23.88</Fit>
        <Fit w={173} size={39} ml={18}>最新24.70</Fit>
        <Fit w={87} size={39} ml={17}>涨幅:</Fit>
        <Fit w={127} size={39} color={C.softRed}>+6.60%</Fit>
      </InfoRow>

      <ChartArea>
        <FiveDayChart />
        <Expand aria-label="全屏">
          <Icon width="75" height="75" viewBox="0 0 75 75" fill="none" stroke="#555" strokeWidth="4">
            <path d="M36 20.500H19.500V36M38 54.500H55V39" />
          </Icon>
        </Expand>
      </ChartArea>
      <Band />
      <Peek>
        <Icon width="1176" height="42" viewBox="0 0 1176 42">
          <path d="M715 40H721V42H715Z M739 40H745V42H739Z" fill="#303030" />
          <path d="M766 41H810V42H766Z M884 41H888V42H884Z M903 41H906V42H903Z M236 41H239V42H236Z M402 41H405V42H402Z M568 41H571V42H568Z" fill="#8a8a8a" />
        </Icon>
      </Peek>

      <BottomBar>
        <Sector>
          <Icon width="28" height="16" viewBox="0 0 28 16" fill="#b8b8b8"><path d="M0 16H28L14 0Z" /></Icon>
          <SectorName><Fit w={144} size={36} color="#bdbdbd">建筑材料</Fit></SectorName>
          <Fit w={100} size={38} color="#e31616">5.13%</Fit>
        </Sector>
        <Action>
          <Icon width="62" height="62" viewBox="0 0 62 62" fill="none" stroke={NAV_GREY} strokeWidth="3">
            <path d="M13 4H49Q56 4 56 11V45L43 58H13Q6 58 6 51V11Q6 4 13 4Z" />
            <path d="M13 17H49M13 25H49M13 33H49M13 40.500H38" />
          </Icon>
          <Fit w={70} size={35} color={NAV_GREY}>下单</Fit>
        </Action>
        <Action>
          <Icon width="62" height="62" viewBox="0 0 62 62" fill="none" stroke={NAV_GREY} strokeWidth="3">
            <path d="M19 6.500H43" />
            <rect x="2" y="12.500" width="58" height="44" rx="7" />
            <path d="M31 24V45M20.500 34.500H41.500" />
            <path d="M10 58.500H21M41 58.500H52" strokeWidth="4" />
          </Icon>
          <Fit w={71} size={35} color={NAV_GREY}>诊股</Fit>
        </Action>
        <Action>
          <Icon width="62" height="62" viewBox="0 0 62 62" fill="none" stroke={NAV_GREY} strokeWidth="3">
            <rect x="6.500" y="6.500" width="48" height="48" />
            <path d="M17 31H44" />
          </Icon>
          <Fit w={107} size={35} color={NAV_GREY}>删自选</Fit>
        </Action>
        <Action>
          <Icon width="62" height="62" viewBox="0 0 62 62" fill="none" stroke={NAV_GREY} strokeWidth="3">
            <circle cx="31" cy="30.500" r="26" />
            <path d="M19 23H43M19 38H43" />
          </Icon>
          <Dot />
          <Fit w={71} size={35} color={NAV_GREY}>功能</Fit>
        </Action>
      </BottomBar>
    </Page>
  );
}
